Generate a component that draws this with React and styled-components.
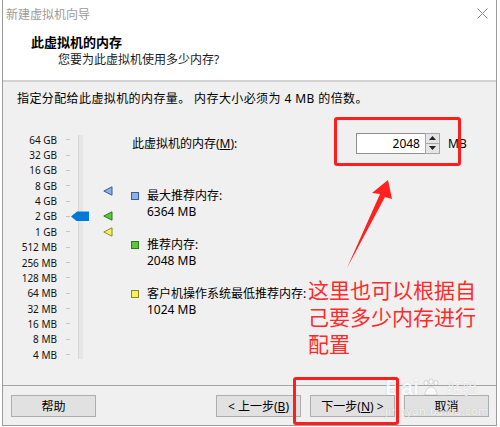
import React from 'react';
import styled, { createGlobalStyle } from 'styled-components';

const GlobalStyle = createGlobalStyle`
  html, body {
    margin: 0;
    padding: 0;
    background: #ffffff;
  }
  body {
    font-family: "Noto Sans", "Noto Sans CJK SC", sans-serif;
    font-size: 12px;
    color: #000;
  }
`;

const ROW = 15.36;
const SCALE = ['64 GB', '32 GB', '16 GB', '8 GB', '4 GB', '2 GB', '1 GB', '512 MB', '256 MB', '128 MB', '64 MB', '32 MB', '16 MB', '8 MB', '4 MB'];

// vertical centre of a memory size on the log2 scale
const posOf = (mb) => ROW / 2 + Math.log2(65536 / mb) * ROW;

const MARKS = [
  { key: 'max', mb: 6364, fill: '#8fb0e2', stroke: '#3a5c9e', label: '最大推荐内存:' },
  { key: 'rec', mb: 2048, fill: '#5cc63c', stroke: '#2b7a1c', label: '推荐内存:' },
  { key: 'min', mb: 1024, fill: '#f6f05a', stroke: '#8a862a', label: '客户机操作系统最低推荐内存:' },
];

const Window = styled.div`
  position: relative;
  margin-left: 2px;
  width: 495px;
  height: 426px;
  box-sizing: border-box;
  border: 1px solid #9c9c9c;
  border-top: none;
  display: flex;
  flex-direction: column;
  background: #f0f0f0;
  overflow: hidden;
`;

const TitleBar = styled.div`
  height: 27px;
  flex: none;
  display: flex;
  align-items: center;
  justify-content: space-between;
  padding: 0 8px 0 3px;
  background: #fff;
  color: #9b9b9b;
  font-size: 12px;
`;

const Header = styled.div`
  flex: none;
  padding: 7px 0 12px 28px;
  background: #fff;
  border-bottom: 2px solid #d2d2d2;
`;

const HeadTitle = styled.div`
  font-size: 13px;
  font-weight: bold;
  line-height: 16px;
`;

const HeadSub = styled.div`
  margin-top: 2px;
  padding-left: 27px;
  line-height: 16px;
  color: #1a1a1a;
`;

const Body = styled.div`
  flex: 1;
  padding: 9px 0 0 14px;
`;

const Intro = styled.div`
  line-height: 16px;
  letter-spacing: 0.4px;
`;

const Main = styled.div`
  display: flex;
  margin-top: 25px;
`;

const Slider = styled.div`
  position: relative;
  width: 114px;
  height: ${ROW * SCALE.length}px;
  flex: none;
`;

const ScaleRow = styled.div`
  display: flex;
  align-items: center;
  height: ${ROW}px;
`;

const ScaleLabel = styled.span`
  width: 40px;
  text-align: right;
  font-size: 10px;
  white-space: nowrap;
  color: #111;
`;

const Tick = styled.span`
  width: 4px;
  height: 1px;
  margin-left: 9px;
  background: #c4c4c4;
`;

const Track = styled.div`
  position: absolute;
  left: 61px;
  top: 3px;
  width: 4px;
  height: 224px;
  background: #e6e6e6;
  border-left: 1px solid #d8d8d8;
`;

const Thumb = styled.div`
  position: absolute;
  left: 54px;
  width: 18px;
  height: 10px;
  background: #0078d7;
  clip-path: polygon(0 50%, 34% 0, 100% 0, 100% 100%, 34% 100%);
`;

const Marker = styled.svg`
  position: absolute;
  left: 86px;
  width: 10px;
  height: 10px;
`;

const Side = styled.div`
  width: 339px;
  display: flex;
  flex-direction: column;
`;

const MemRow = styled.div`
  display: flex;
  align-items: center;
  height: 22px;
  padding-left: 1px;
`;

const Underline = styled.span`
  text-decoration: underline;
`;

const Spin = styled.div`
  margin-left: auto;
  display: flex;
  height: 21px;
`;

const SpinInput = styled.div`
  width: 69px;
  box-sizing: border-box;
  border: 1px solid #8f8f8f;
  border-right: none;
  background: #fff;
  text-align: right;
  padding-right: 5px;
  line-height: 19px;
  font-size: 12px;
`;

const SpinButtons = styled.div`
  width: 15px;
  display: flex;
  flex-direction: column;
  border: 1px solid #a8a8a8;
  box-sizing: border-box;
`;

const SpinButton = styled.div`
  flex: 1;
  display: flex;
  align-items: center;
  justify-content: center;
  background: #e5e5e5;
  border-top: ${(p) => (p.$lower ? '1px solid #a8a8a8' : 'none')};
`;

const Unit = styled.span`
  width: 22px;
  margin-left: 8px;
`;

const Legend = styled.div`
  margin-top: 34px;
  display: flex;
  flex-direction: column;
  gap: 17px;
`;

const LegendItem = styled.div`
  display: grid;
  grid-template-columns: 16px auto;
  line-height: 16px;
`;

const Swatch = styled.span`
  width: 8px;
  height: 8px;
  box-sizing: border-box;
  margin-top: 4px;
  background: ${(p) => p.$fill};
  border: 1px solid ${(p) => p.$stroke};
`;

const Footer = styled.div`
  flex: none;
  height: 40px;
  box-sizing: border-box;
  border-top: 1px solid #a3a3a3;
  display: flex;
  align-items: flex-start;
  gap: 9px;
  padding: 9px 7px 0 8px;
`;

const Button = styled.div`
  width: 85px;
  height: 22px;
  box-sizing: border-box;
  border: 1px solid #adadad;
  background: #e1e1e1;
  display: flex;
  align-items: center;
  justify-content: center;
  font-size: 12px;
  margin-left: ${(p) => (p.$push ? 'auto' : '0')};
`;

const RedBox = styled.div`
  position: absolute;
  box-sizing: border-box;
  border: 3px solid #ff1e1e;
  border-radius: 3px;
`;

const Arrow = styled.svg`
  position: absolute;
  left: 0;
  top: 0;
  width: 493px;
  height: 426px;
  pointer-events: none;
`;

const Note = styled.div`
  position: absolute;
  left: 305px;
  top: 277px;
  width: 172px;
  font-size: 21px;
  line-height: 27px;
  color: #ff2a2a;
`;

const Watermark = styled.div`
  position: absolute;
  left: 382px;
  top: 376px;
  color: #ffffff;
  text-shadow: 0 0 1px rgba(0, 0, 0, 0.3);
  opacity: 0.7;
  pointer-events: none;
`;

const MarkTop = styled.div`
  display: flex;
  align-items: center;
  gap: 2px;
  font-size: 22px;
  font-weight: bold;
  line-height: 24px;
  font-family: "Liberation Sans", sans-serif;
`;

const MarkCn = styled.span`
  font-size: 15px;
  font-weight: normal;
  font-family: "Noto Sans CJK SC", sans-serif;
  margin-left: 4px;
`;

const MarkUrl = styled.div`
  font-size: 11px;
  line-height: 14px;
  margin-top: 4px;
  letter-spacing: 0.5px;
`;

function CloseIcon() {
  return (
    <svg width="11" height="11" viewBox="0 0 11 11">
      <path d="M0.5 0.5 L10.5 10.5 M10.5 0.5 L0.5 10.5" stroke="#8a8a8a" strokeWidth="1" />
    </svg>
  );
}

function Paw() {
  return (
    <svg width="20" height="20" viewBox="0 0 20 20">
      <g fill="#fff" stroke="rgba(0,0,0,0.3)" strokeWidth="0.6">
        <ellipse cx="5" cy="5" rx="2" ry="2.6" />
        <ellipse cx="10" cy="3.5" rx="2" ry="2.6" />
        <ellipse cx="15" cy="5" rx="2" ry="2.6" />
        <path d="M4 17 C4 11 8 9 10 9 C12 9 16 11 16 17 Z" />
      </g>
    </svg>
  );
}

export default function App() {
  return (
    <>
      <GlobalStyle />
      <Window>
        <TitleBar>
          <span>新建虚拟机向导</span>
          <CloseIcon />
        </TitleBar>

        <Header>
          <HeadTitle>此虚拟机的内存</HeadTitle>
          <HeadSub>您要为此虚拟机使用多少内存?</HeadSub>
        </Header>

        <Body>
          <Intro>指定分配给此虚拟机的内存量。 内存大小必须为 4 MB 的倍数。</Intro>
          <Main>
            <Slider>
              {SCALE.map((s) => (
                <ScaleRow key={s}>
                  <ScaleLabel>{s}</ScaleLabel>
                  <Tick />
                </ScaleRow>
              ))}
              <Track />
              <Thumb style={{ top: posOf(2048) - 5 }} />
              {MARKS.map((m) => (
                <Marker key={m.key} viewBox="0 0 10 10" style={{ top: posOf(m.mb) - 5 }}>
                  <path d="M0.8 5 L9 0.8 L9 9.2 Z" fill={m.fill} stroke={m.stroke} strokeWidth="1" strokeLinejoin="round" />
                </Marker>
              ))}
            </Slider>

            <Side>
              <MemRow>
                <span>此虚拟机的内存(<Underline>M</Underline>):</span>
                <Spin>
                  <SpinInput>2048</SpinInput>
                  <SpinButtons>
                    <SpinButton>
                      <svg width="7" height="4" viewBox="0 0 7 4"><path d="M3.5 0 L7 4 L0 4 Z" fill="#222" /></svg>
                    </SpinButton>
                    <SpinButton $lower>
                      <svg width="7" height="4" viewBox="0 0 7 4"><path d="M0 0 L7 0 L3.5 4 Z" fill="#222" /></svg>
                    </SpinButton>
                  </SpinButtons>
                </Spin>
                <Unit>MB</Unit>
              </MemRow>

              <Legend>
                {MARKS.map((m) => (
                  <LegendItem key={m.key}>
                    <Swatch $fill={m.fill} $stroke={m.stroke} />
                    <span>{m.label}</span>
                    <span />
                    <span>{m.mb} MB</span>
                  </LegendItem>
                ))}
              </Legend>
            </Side>
          </Main>
        </Body>

        <Footer>
          <Button>帮助</Button>
          <Button $push>&lt; 上一步(<Underline>B</Underline>)</Button>
          <Button>下一步(<Underline>N</Underline>) &gt;</Button>
          <Button>取消</Button>
        </Footer>

        <Watermark>
          <MarkTop>
            <span>Bai</span>
            <Paw />
            <MarkCn>经验</MarkCn>
          </MarkTop>
          <MarkUrl>jingyan.baidu.com</MarkUrl>
        </Watermark>

        <RedBox style={{ left: 331, top: 117, width: 127, height: 49 }} />
        <RedBox style={{ left: 290, top: 377, width: 106, height: 48 }} />
        <Arrow viewBox="0 0 493 426">
          <path d="M385 180 L389 199 L382 197 L344 268 L377 194 L369 193 Z" fill="#ff2020" />
        </Arrow>
        <Note>这里也可以根据自己要多少内存进行配置</Note>
      </Window>
    </>
  );
}
